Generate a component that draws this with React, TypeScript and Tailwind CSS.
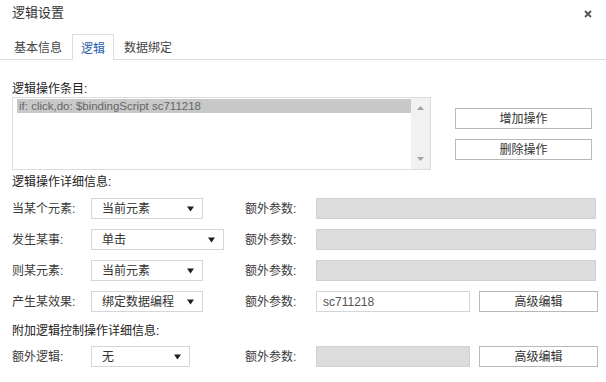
import type { ReactNode } from 'react';

// Triángulo del desplegable, dibujado a mano para que quede del tamaño del original.
function Caret() {
  return (
    <svg width="7" height="6" viewBox="0 0 7 6" className="shrink-0">
      <path d="M0 0.5 H7 L3.5 5.5 Z" fill="#1f1f1f" />
    </svg>
  );
}

function Select({ value, width }: { value: string; width: string }) {
  return (
    <div
      className={`flex h-[21px] items-center justify-between border border-[#d3d7db] bg-white pl-[10px] pr-[8px] text-[12px] text-[#333] ${width}`}
    >
      <span className="leading-[14px]">{value}</span>
      <Caret />
    </div>
  );
}

function Button({ children, className = '' }: { children: ReactNode; className?: string }) {
  return (
    <button
      type="button"
      className={`h-[21px] border border-[#b9b9b9] bg-white text-[12px] leading-[14px] text-[#333] ${className}`}
    >
      {children}
    </button>
  );
}

// Fila del formulario: etiqueta, desplegable, "额外参数" y lo que venga a la derecha.
function Row({ label, select, children }: { label: string; select: ReactNode; children: ReactNode }) {
  return (
    <div className="flex h-[21px] items-center">
      <span className="w-[79px] text-[12px] leading-[14px] text-[#3a3a3a]">{label}</span>
      <div className="w-[154px]">{select}</div>
      <span className="w-[71px] text-[12px] leading-[14px] text-[#3a3a3a]">额外参数:</span>
      {children}
    </div>
  );
}

function GrayInput({ width }: { width: string }) {
  return <div className={`h-[21px] border border-[#cdd2d6] bg-[#dcdcdc] ${width}`} />;
}

export default function App() {
  return (
    <div className="h-[382px] w-[606px] bg-white font-['Liberation_Sans','Noto_Sans_CJK_SC',sans-serif] text-[#333]">
      <header className="flex h-[34px] items-start justify-between pl-3 pr-[14px] pt-[5px]">
        <h1 className="text-[13px] leading-[16px] text-[#333]">逻辑设置</h1>
        <svg width="8" height="8" viewBox="0 0 8 8" className="mt-[5px]">
          <path d="M1 1 L7 7 M7 1 L1 7" stroke="#555" strokeWidth="1.8" />
        </svg>
      </header>

      <nav className="flex h-[26px] items-stretch border-b border-[#dedede] pl-[6px]">
        <div className="px-[8px] pt-[7px] text-[12px] leading-[14px] text-[#444]">基本信息</div>
        <div className="-mb-px ml-[2px] border border-b-0 border-[#dedede] bg-white px-[8px] pt-[7px] text-[12px] leading-[14px] text-[#2a5db0]">
          逻辑
        </div>
        <div className="px-[10px] pt-[7px] text-[12px] leading-[14px] text-[#444]">数据绑定</div>
      </nav>

      <main className="pl-3">
        <p className="mt-[22px] h-[14px] text-[12px] leading-[14px] text-[#222]">逻辑操作条目:</p>

        <div className="mt-px flex items-start">
          <div className="flex h-[73px] w-[419px] border border-[#d8dde1] bg-white">
            <div className="flex-1 pl-[4px] pt-[1px]">
              <div className="h-[14px] bg-[#c8c8c8] pl-[2px] text-[11.5px] leading-[14px] text-[#666]">
                if: click,do: $bindingScript sc711218
              </div>
            </div>
            <div className="flex w-[19px] flex-col items-center justify-between bg-[#f1f1f1] pb-[8px] pt-[8px]">
              <svg width="7" height="4" viewBox="0 0 7 4">
                <path d="M0 4 L3.5 0 L7 4 Z" fill="#a3a3a3" />
              </svg>
              <svg width="7" height="4" viewBox="0 0 7 4">
                <path d="M0 0 L7 0 L3.5 4 Z" fill="#a3a3a3" />
              </svg>
            </div>
          </div>
          <div className="ml-[24px] mt-[11px] flex flex-col gap-[10px]">
            <Button className="w-[137px]">增加操作</Button>
            <Button className="w-[137px]">删除操作</Button>
          </div>
        </div>

        <p className="mt-[5px] h-[14px] text-[12px] leading-[14px] text-[#222]">逻辑操作详细信息:</p>

        <div className="mt-[9px] flex flex-col gap-[10px]">
          <Row label="当某个元素:" select={<Select value="当前元素" width="w-[112px]" />}>
            <GrayInput width="w-[280px]" />
          </Row>
          <Row label="发生某事:" select={<Select value="单击" width="w-[133px]" />}>
            <GrayInput width="w-[280px]" />
          </Row>
          <Row label="则某元素:" select={<Select value="当前元素" width="w-[112px]" />}>
            <GrayInput width="w-[280px]" />
          </Row>
          <Row label="产生某效果:" select={<Select value="绑定数据编程" width="w-[112px]" />}>
            <div className="flex h-[21px] w-[154px] items-center border border-[#d0d6dc] bg-white pl-[6px] text-[12px] text-[#555]">
              sc711218
            </div>
            <Button className="ml-[9px] w-[119px]">高级编辑</Button>
          </Row>
        </div>

        <p className="mt-[12px] h-[14px] text-[12px] leading-[14px] text-[#222]">附加逻辑控制操作详细信息:</p>

        <div className="mt-[8px]">
          <Row label="额外逻辑:" select={<Select value="无" width="w-[99px]" />}>
            <GrayInput width="w-[154px]" />
            <Button className="ml-[9px] w-[119px]">高级编辑</Button>
          </Row>
        </div>
      </main>
    </div>
  );
}
